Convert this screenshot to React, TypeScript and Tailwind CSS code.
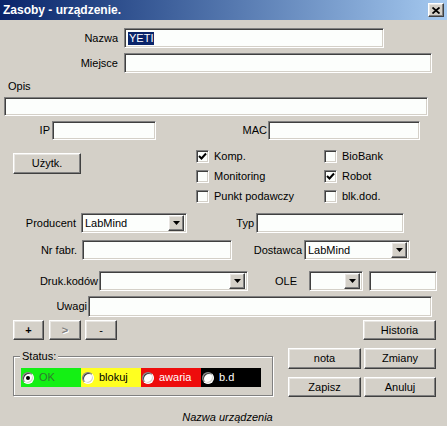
import React from 'react';

const sunken =
  'bg-[#fcfefc] border border-t-[#808080] border-l-[#808080] border-b-white border-r-white shadow-[inset_1px_1px_0_#404040,inset_-1px_-1px_0_#d4d0c8]';
const raised =
  'bg-[#d4d0c8] border border-t-white border-l-white border-b-[#404040] border-r-[#404040] shadow-[inset_-1px_-1px_0_#808080,inset_1px_1px_0_#e8e6e2]';

const Field = ({ w, h = 'h-[20px]', children }: { w: string; h?: string; children?: React.ReactNode }) => (
  <div className={`${sunken} ${w} ${h} flex items-center pl-[3px]`}>{children}</div>
);

const Arrow = () => (
  <svg width="7" height="4" viewBox="0 0 7 4">
    <path d="M0 0h7L3.5 4z" fill="#000" />
  </svg>
);

const Combo = ({ w, value }: { w: string; value?: string }) => (
  <div className={`${sunken} ${w} h-[20px] flex items-center justify-between pl-[3px] pr-[2px]`}>
    <span>{value}</span>
    <div className={`${raised} w-[16px] h-[16px] flex items-center justify-center`}>
      <Arrow />
    </div>
  </div>
);

const Btn = ({ w, h = 'h-[20px]', children, className = '' }: { w: string; h?: string; children: React.ReactNode; className?: string }) => (
  <button className={`${raised} ${w} ${h} flex items-center justify-center ${className}`}>{children}</button>
);

const Check = ({ label, checked }: { label: string; checked?: boolean }) => (
  <div className="h-[20px] flex items-center">
    <div className={`${sunken} w-[13px] h-[13px] flex items-center justify-center`}>
      {checked && (
        <svg width="9" height="9" viewBox="0 0 9 9">
          <path d="M1 4l2.5 2.5L8 1.5" fill="none" stroke="#000" strokeWidth="2" />
        </svg>
      )}
    </div>
    <span className="ml-[5px]">{label}</span>
  </div>
);

const Radio = ({ checked }: { checked?: boolean }) => (
  <div className="w-[12px] h-[12px] rounded-full bg-white border border-t-[#808080] border-l-[#808080] border-b-white border-r-white shadow-[inset_1px_1px_0_#404040,inset_-1px_-1px_0_#d4d0c8] flex items-center justify-center">
    {checked && <div className="w-[4px] h-[4px] rounded-full bg-black" />}
  </div>
);

export default function App() {
  const statuses = [
    { label: 'OK', bg: 'bg-[#14f014]', text: 'text-[#2e7d2e]', checked: true },
    { label: 'blokuj', bg: 'bg-[#ffff20]', text: 'text-black' },
    { label: 'awaria', bg: 'bg-[#ee0c0c]', text: 'text-white' },
    { label: 'b.d', bg: 'bg-black', text: 'text-white' },
  ];

  return (
    <div className="w-[447px] h-[426px] bg-[#d4d0c8] font-['Liberation_Sans',Arial,sans-serif] text-[11px] text-black flex flex-col overflow-hidden leading-none">
      {/* Title bar */}
      <div className="h-[20px] flex items-center justify-between pl-[3px] pr-[2px] bg-linear-to-r from-[#0a246a] to-[#a6caf0]">
        <span className="text-white font-bold text-[12px]">Zasoby - urządzenie.</span>
        <div className={`${raised} w-[16px] h-[14px] mr-[1px] flex items-center justify-center`}>
          <svg width="8" height="7" viewBox="0 0 8 7">
            <path d="M0.5 0.5l7 6M7.5 0.5l-7 6" stroke="#000" strokeWidth="1.8" />
          </svg>
        </div>
      </div>

      <div className="mt-[8px] h-[20px] flex items-center">
        <span className="w-[124px] pr-[6px] text-right">Nazwa</span>
        <Field w="w-[260px]">
          <span className="bg-[#0a246a] text-white px-[1px] py-[1px]">YETI</span>
        </Field>
      </div>

      <div className="mt-[5px] h-[20px] flex items-center">
        <span className="w-[124px] pr-[6px] text-right">Miejsce</span>
        <Field w="w-[308px]" />
      </div>

      <div className="mt-[7px] h-[12px] pl-[8px] flex items-center">Opis</div>
      <div className="mt-[5px] ml-[4px]">
        <Field w="w-[424px]" h="h-[19px]" />
      </div>

      <div className="mt-[5px] h-[19px] flex items-center">
        <span className="w-[52px] pr-[2px] text-right">IP</span>
        <Field w="w-[104px]" h="h-[19px]" />
        <span className="w-[112px] pr-[1px] text-right">MAC</span>
        <Field w="w-[152px]" h="h-[19px]" />
      </div>

      <div className="mt-[6px] flex">
        <div className="w-[196px] pl-[13px] pt-[7px]">
          <Btn w="w-[68px]" h="h-[21px]">Użytk.</Btn>
        </div>
        <div className="w-[128px] flex flex-col">
          <Check label="Komp." checked />
          <Check label="Monitoring" />
          <Check label="Punkt podawczy" />
        </div>
        <div className="flex flex-col">
          <Check label="BioBank" />
          <Check label="Robot" checked />
          <Check label="blk.dod." />
        </div>
      </div>

      <div className="mt-[7px] h-[20px] flex items-center">
        <span className="w-[81px] pr-[5px] text-right">Producent</span>
        <Combo w="w-[106px]" value="LabMind" />
        <span className="w-[69px] pr-[2px] text-right">Typ</span>
        <Field w="w-[148px]" />
      </div>

      <div className="mt-[7px] h-[20px] flex items-center">
        <span className="w-[82px] pr-[5px] text-right">Nr fabr.</span>
        <Field w="w-[150px]" />
        <span className="w-[72px] pr-[2px] text-right">Dostawca</span>
        <Combo w="w-[106px]" value="LabMind" />
      </div>

      <div className="mt-[11px] h-[20px] flex items-center">
        <span className="w-[99px] pr-[1px] text-right">Druk.kodów</span>
        <Combo w="w-[149px]" />
        <span className="w-[61px] pr-[12px] text-right">OLE</span>
        <Combo w="w-[54px]" />
        <div className="ml-[6px]">
          <Field w="w-[68px]" />
        </div>
      </div>

      <div className="mt-[5px] h-[21px] flex items-center">
        <span className="w-[88px] pr-[1px] text-right">Uwagi</span>
        <Field w="w-[344px]" h="h-[21px]" />
      </div>

      <div className="mt-[3px] h-[20px] flex items-center">
        <Btn w="w-[31px]" className="ml-[13px] font-bold">+</Btn>
        <Btn w="w-[32px]" className="ml-[5px] text-[#808080] font-bold [text-shadow:1px_1px_0_#fff]">&gt;</Btn>
        <Btn w="w-[32px]" className="ml-[4px]">-</Btn>
        <Btn w="w-[73px]" className="ml-auto mr-[11px]">Historia</Btn>
      </div>

      <div className="mt-[8px] flex">
        {/* Status group */}
        <div className="relative ml-[13px] mt-[8px] w-[260px] h-[40px] border border-[#808080] shadow-[inset_1px_1px_0_#fff,1px_1px_0_#fff] pl-[7px] pt-[11px]">
          <span className="absolute -top-[6px] left-[6px] bg-[#d4d0c8] px-[2px]">Status:</span>
          <div className="flex h-[19px]">
            {statuses.map((s) => (
              <div key={s.label} className={`${s.bg} w-[60px] h-[19px] flex items-center pl-[1px]`}>
                <Radio checked={s.checked} />
                <span className={`ml-[5px] ${s.text}`}>{s.label}</span>
              </div>
            ))}
          </div>
        </div>

        <div className="ml-[15px] grid grid-cols-[73px_73px] gap-x-[3px] gap-y-[8px]">
          <Btn w="w-[73px]" h="h-[21px]">nota</Btn>
          <Btn w="w-[72px]" h="h-[21px]">Zmiany</Btn>
          <Btn w="w-[73px]" h="h-[20px]">Zapisz</Btn>
          <Btn w="w-[72px]" h="h-[20px]">Anuluj</Btn>
        </div>
      </div>

      <div className="mt-[15px] h-[12px] flex justify-center pl-[8px] italic">Nazwa urządzenia</div>
    </div>
  );
}
